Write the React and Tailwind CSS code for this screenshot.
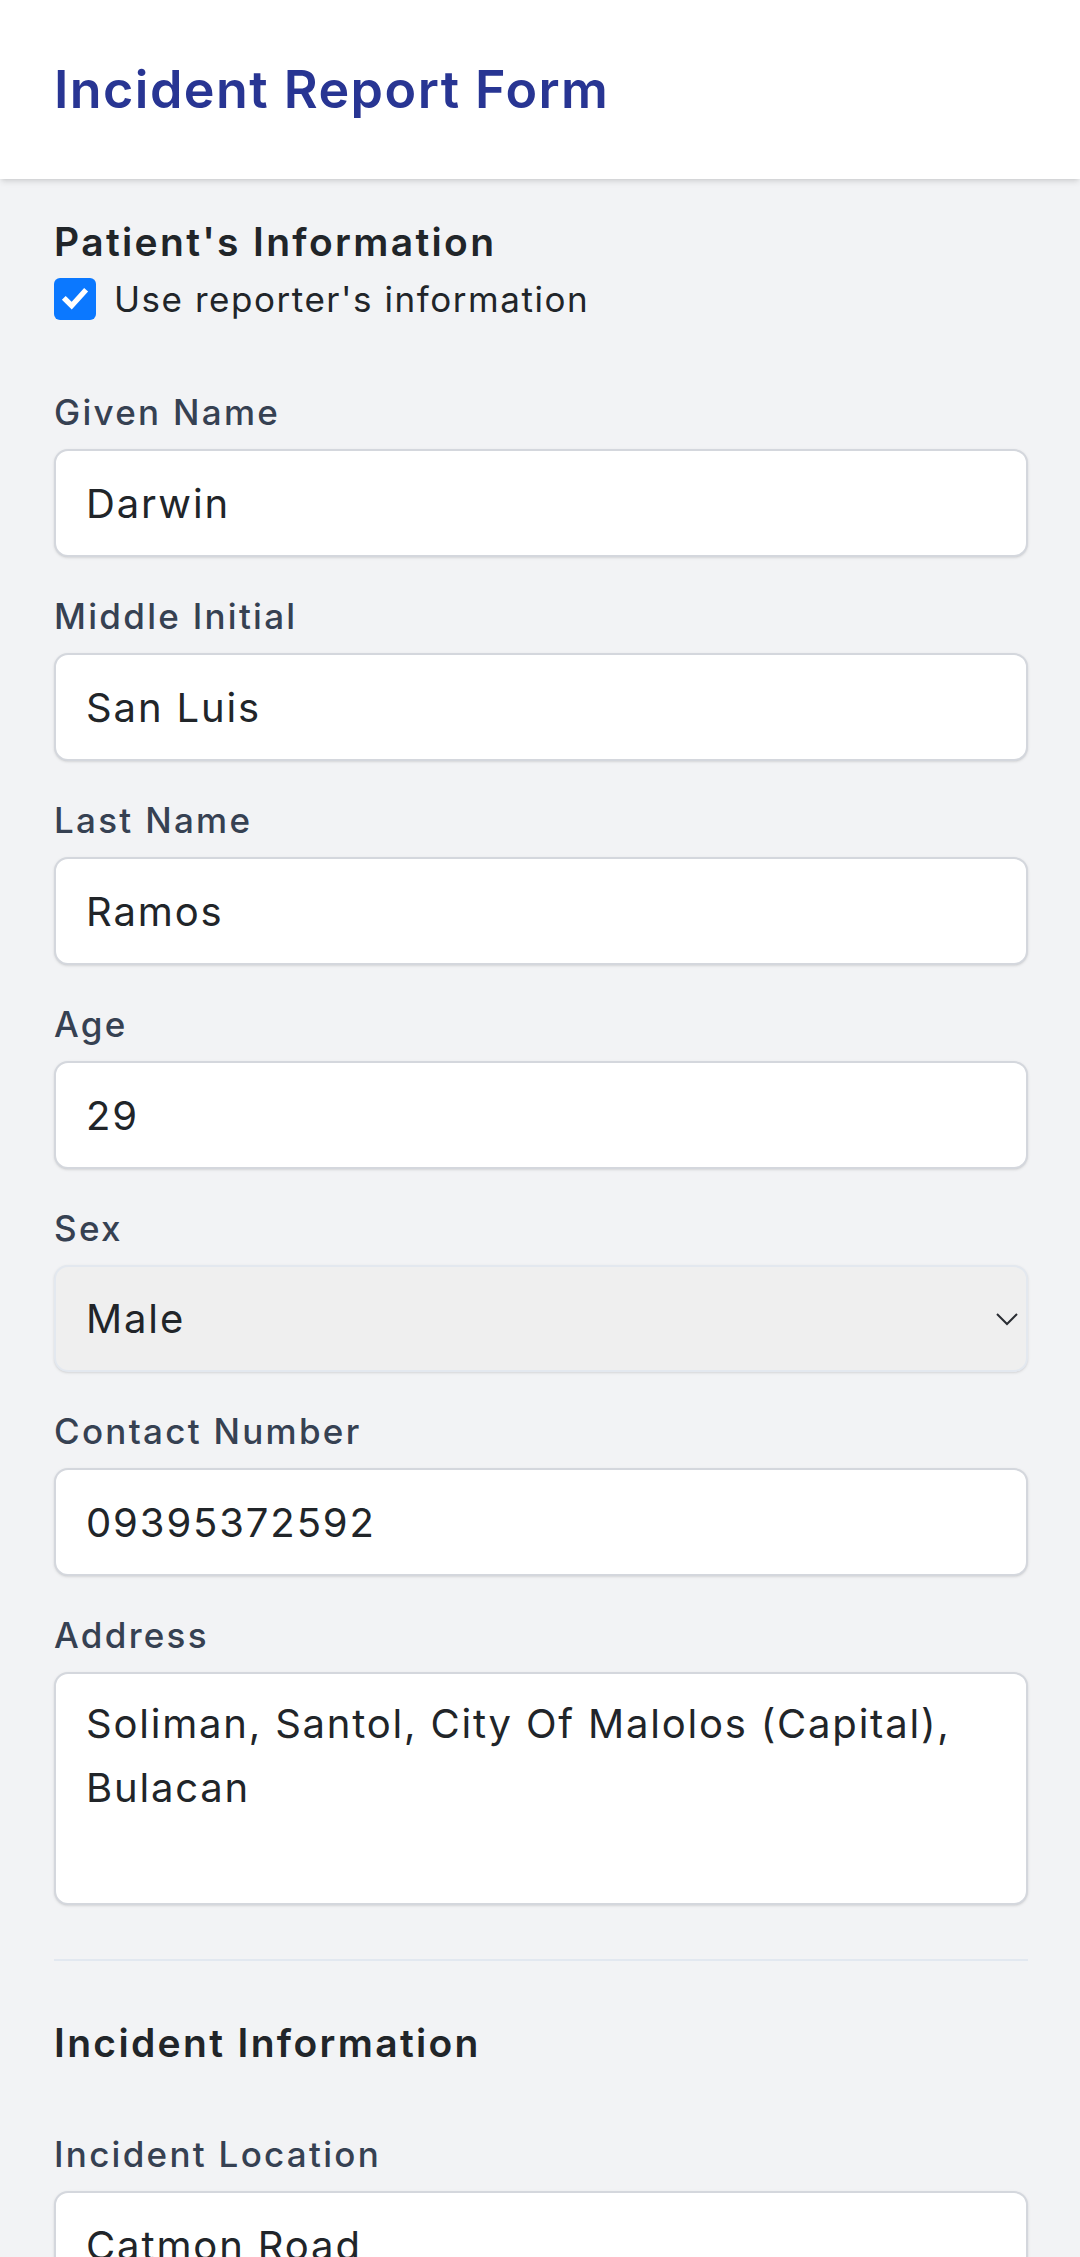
import React, { useState } from 'react'

const font = { fontFamily: 'Inter, "Noto Sans", sans-serif' }

const Field = ({ label, children }) => {
  return (
    <div className="flex flex-col">
      <label className="text-[35px] leading-[40px] font-medium tracking-[0.065em] text-[#364152] mb-[17px]">{label}</label>
      {children}
    </div>
  )
}

const TextInput = ({ value }) => {
  return (
    <input
      type="text"
      defaultValue={value}
      className="h-[108px] w-full rounded-[14px] border-2 border-[#d4d7dd] bg-white px-[30px] text-[40px] tracking-[0.047em] text-[#212529] shadow-sm outline-none"
      style={font}
    />
  )
}

const App = () => {
  const [useReporter, setUseReporter] = useState(true)

  return (
    <div className="min-h-screen bg-[#f2f3f5]" style={font}>
      <header className="flex h-[179px] items-center bg-white px-[54px] shadow-md">
        <h1 className="text-[52px] font-semibold tracking-[0.028em] text-[#283593]">Incident Report Form</h1>
      </header>

      <main className="pl-[54px] pr-[52px] pt-[41px] pb-[200px]">
        <h2 className="text-[39px] leading-[44px] font-semibold tracking-[0.06em] text-[#212529]">Patient's Information</h2>

        <label className="mt-[14px] flex h-[42px] items-center gap-[18px]" onClick={() => setUseReporter(!useReporter)}>
          <span className={"flex h-[42px] w-[42px] items-center justify-center rounded-[6px] " + (useReporter ? "bg-[#0b78ff]" : "border-2 border-gray-400 bg-white")}>
            {useReporter && (
              <svg viewBox="0 0 24 24" className="h-[32px] w-[32px]" fill="none" stroke="white" strokeWidth="4" strokeLinecap="square">
                <path d="M5 12.5l4.5 4.5L19 6.5" />
              </svg>
            )}
          </span>
          <span className="text-[35px] leading-[42px] tracking-[0.044em] text-[#212529]">Use reporter's information</span>
        </label>

        <div className="mt-[72px] flex flex-col gap-[39px]">
          <Field label="Given Name">
            <TextInput value="Darwin" />
          </Field>
          <Field label="Middle Initial">
            <TextInput value="San Luis" />
          </Field>
          <Field label="Last Name">
            <TextInput value="Ramos" />
          </Field>
          <Field label="Age">
            <TextInput value="29" />
          </Field>
          <Field label="Sex">
            <div className="relative">
              <select
                defaultValue="Male"
                className="h-[107px] w-full appearance-none rounded-[14px] border-2 border-[#e3e8ef] bg-[#efefef] px-[30px] text-[40px] tracking-[0.047em] text-[#212529] shadow-sm outline-none"
                style={font}
              >
                <option>Male</option>
                <option>Female</option>
              </select>
              <svg viewBox="0 0 22 13" className="pointer-events-none absolute right-[10px] top-[48px] h-[13px] w-[22px]" fill="none" stroke="#2a2d33" strokeWidth="2">
                <path d="M1 1l10 10L21 1" />
              </svg>
            </div>
          </Field>
          <Field label="Contact Number">
            <TextInput value="09395372592" />
          </Field>
          <Field label="Address">
            <textarea
              defaultValue="Soliman, Santol, City Of Malolos (Capital), Bulacan"
              className="h-[233px] w-full resize-none rounded-[14px] border-2 border-[#d4d7dd] bg-white px-[30px] pt-[18px] text-[40px] leading-[64px] tracking-[0.045em] text-[#212529] shadow-sm outline-none"
              style={font}
            />
          </Field>
        </div>

        <div className="mt-[54px] h-[2px] bg-[#e2e8f0]" />

        <h2 className="mt-[60px] text-[39px] leading-[44px] font-semibold tracking-[0.06em] text-[#212529]">Incident Information</h2>

        <div className="mt-[69px]">
          <Field label="Incident Location">
            <TextInput value="Catmon Road" />
          </Field>
        </div>
      </main>
    </div>
  )
}

export default App
